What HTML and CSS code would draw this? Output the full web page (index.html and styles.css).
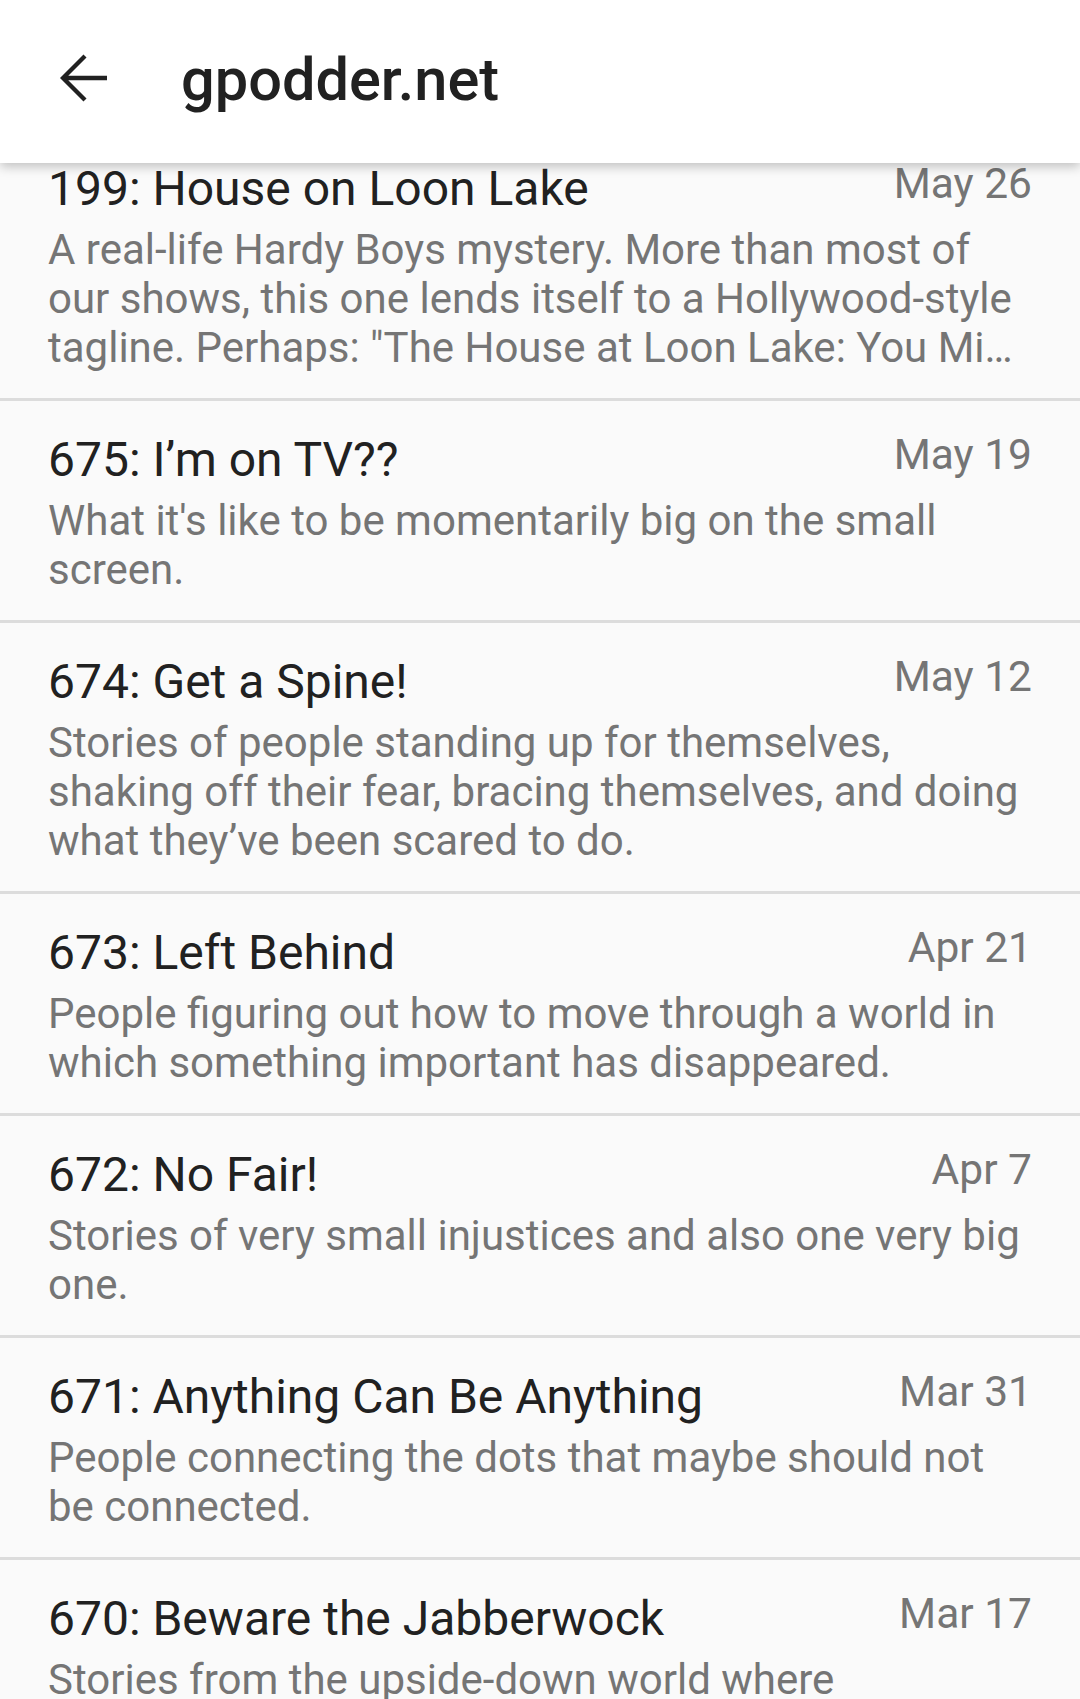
FILE: index.html
```html
<!DOCTYPE html>
<html lang="en">
<head>
<meta charset="utf-8">
<title>gpodder.net</title>
<link rel="stylesheet" href="styles.css">
</head>
<body>
<header class="toolbar">
  <svg class="back" viewBox="0 0 48 48" width="48" height="48" aria-hidden="true">
    <path d="M47 24H3M25 2L3 24l22 22" fill="none" stroke="#212121" stroke-width="4.3"/>
  </svg>
  <h1 class="title">gpodder.net</h1>
</header>
<main class="list">
  <div class="item">
    <div class="row"><div class="name">199: House on Loon Lake</div><div class="date">May 26</div></div>
    <div class="desc">A real-life Hardy Boys mystery. More than most of our shows, this one lends itself to a Hollywood-style tagline. Perhaps: "The House at Loon Lake: You Mi…</div>
  </div>
  <div class="item">
    <div class="row"><div class="name">675: I’m on TV??</div><div class="date">May 19</div></div>
    <div class="desc">What it's like to be momentarily big on the small screen.</div>
  </div>
  <div class="item">
    <div class="row"><div class="name">674: Get a Spine!</div><div class="date">May 12</div></div>
    <div class="desc">Stories of people standing up for themselves, shaking off their fear, bracing themselves, and doing what they’ve been scared to do.</div>
  </div>
  <div class="item">
    <div class="row"><div class="name">673: Left Behind</div><div class="date">Apr 21</div></div>
    <div class="desc">People figuring out how to move through a world in which something important has disappeared.</div>
  </div>
  <div class="item">
    <div class="row"><div class="name">672: No Fair!</div><div class="date">Apr 7</div></div>
    <div class="desc">Stories of very small injustices and also one very big one.</div>
  </div>
  <div class="item">
    <div class="row"><div class="name">671: Anything Can Be Anything</div><div class="date">Mar 31</div></div>
    <div class="desc">People connecting the dots that maybe should not be connected.</div>
  </div>
  <div class="item">
    <div class="row"><div class="name">670: Beware the Jabberwock</div><div class="date">Mar 17</div></div>
    <div class="desc">Stories from the upside-down world where<br>everything is backwards.</div>
  </div>
</main>
</body>
</html>
```

FILE: styles.css
```css
* { box-sizing: border-box; }
html, body {
  margin: 0;
  padding: 0;
  background: #fafafa;
  font-family: Roboto, "Noto Sans", sans-serif;
  overflow: hidden;
  height: 1699px;
}
.toolbar {
  position: relative;
  z-index: 2;
  height: 163px;
  background: #ffffff;
  display: flex;
  align-items: center;
  box-shadow: 0 4px 10px rgba(0, 0, 0, 0.22);
}
.back {
  width: 48px;
  height: 48px;
  margin-left: 60px;
  margin-top: -8px;
  flex: none;
}
.title {
  margin: -4px 0 0 73px;
  font-size: 59.5px;
  font-weight: 500;
  color: #212121;
}
.list {
  position: relative;
  z-index: 1;
  margin-top: -33px;
}
.item {
  padding: 31px 48px 26px 48px;
  border-bottom: 3px solid #dcdcdc;
}
.row {
  display: flex;
  justify-content: space-between;
  align-items: flex-start;
  gap: 20px;
}
.name {
  font-size: 48px;
  line-height: 56px;
  color: #212121;
}
.date {
  font-size: 42.5px;
  line-height: 47px;
  color: #757575;
  white-space: nowrap;
  margin-top: -1px;
}
.desc {
  margin-top: 8px;
  font-size: 42px;
  line-height: 49px;
  color: #757575;
}
```
